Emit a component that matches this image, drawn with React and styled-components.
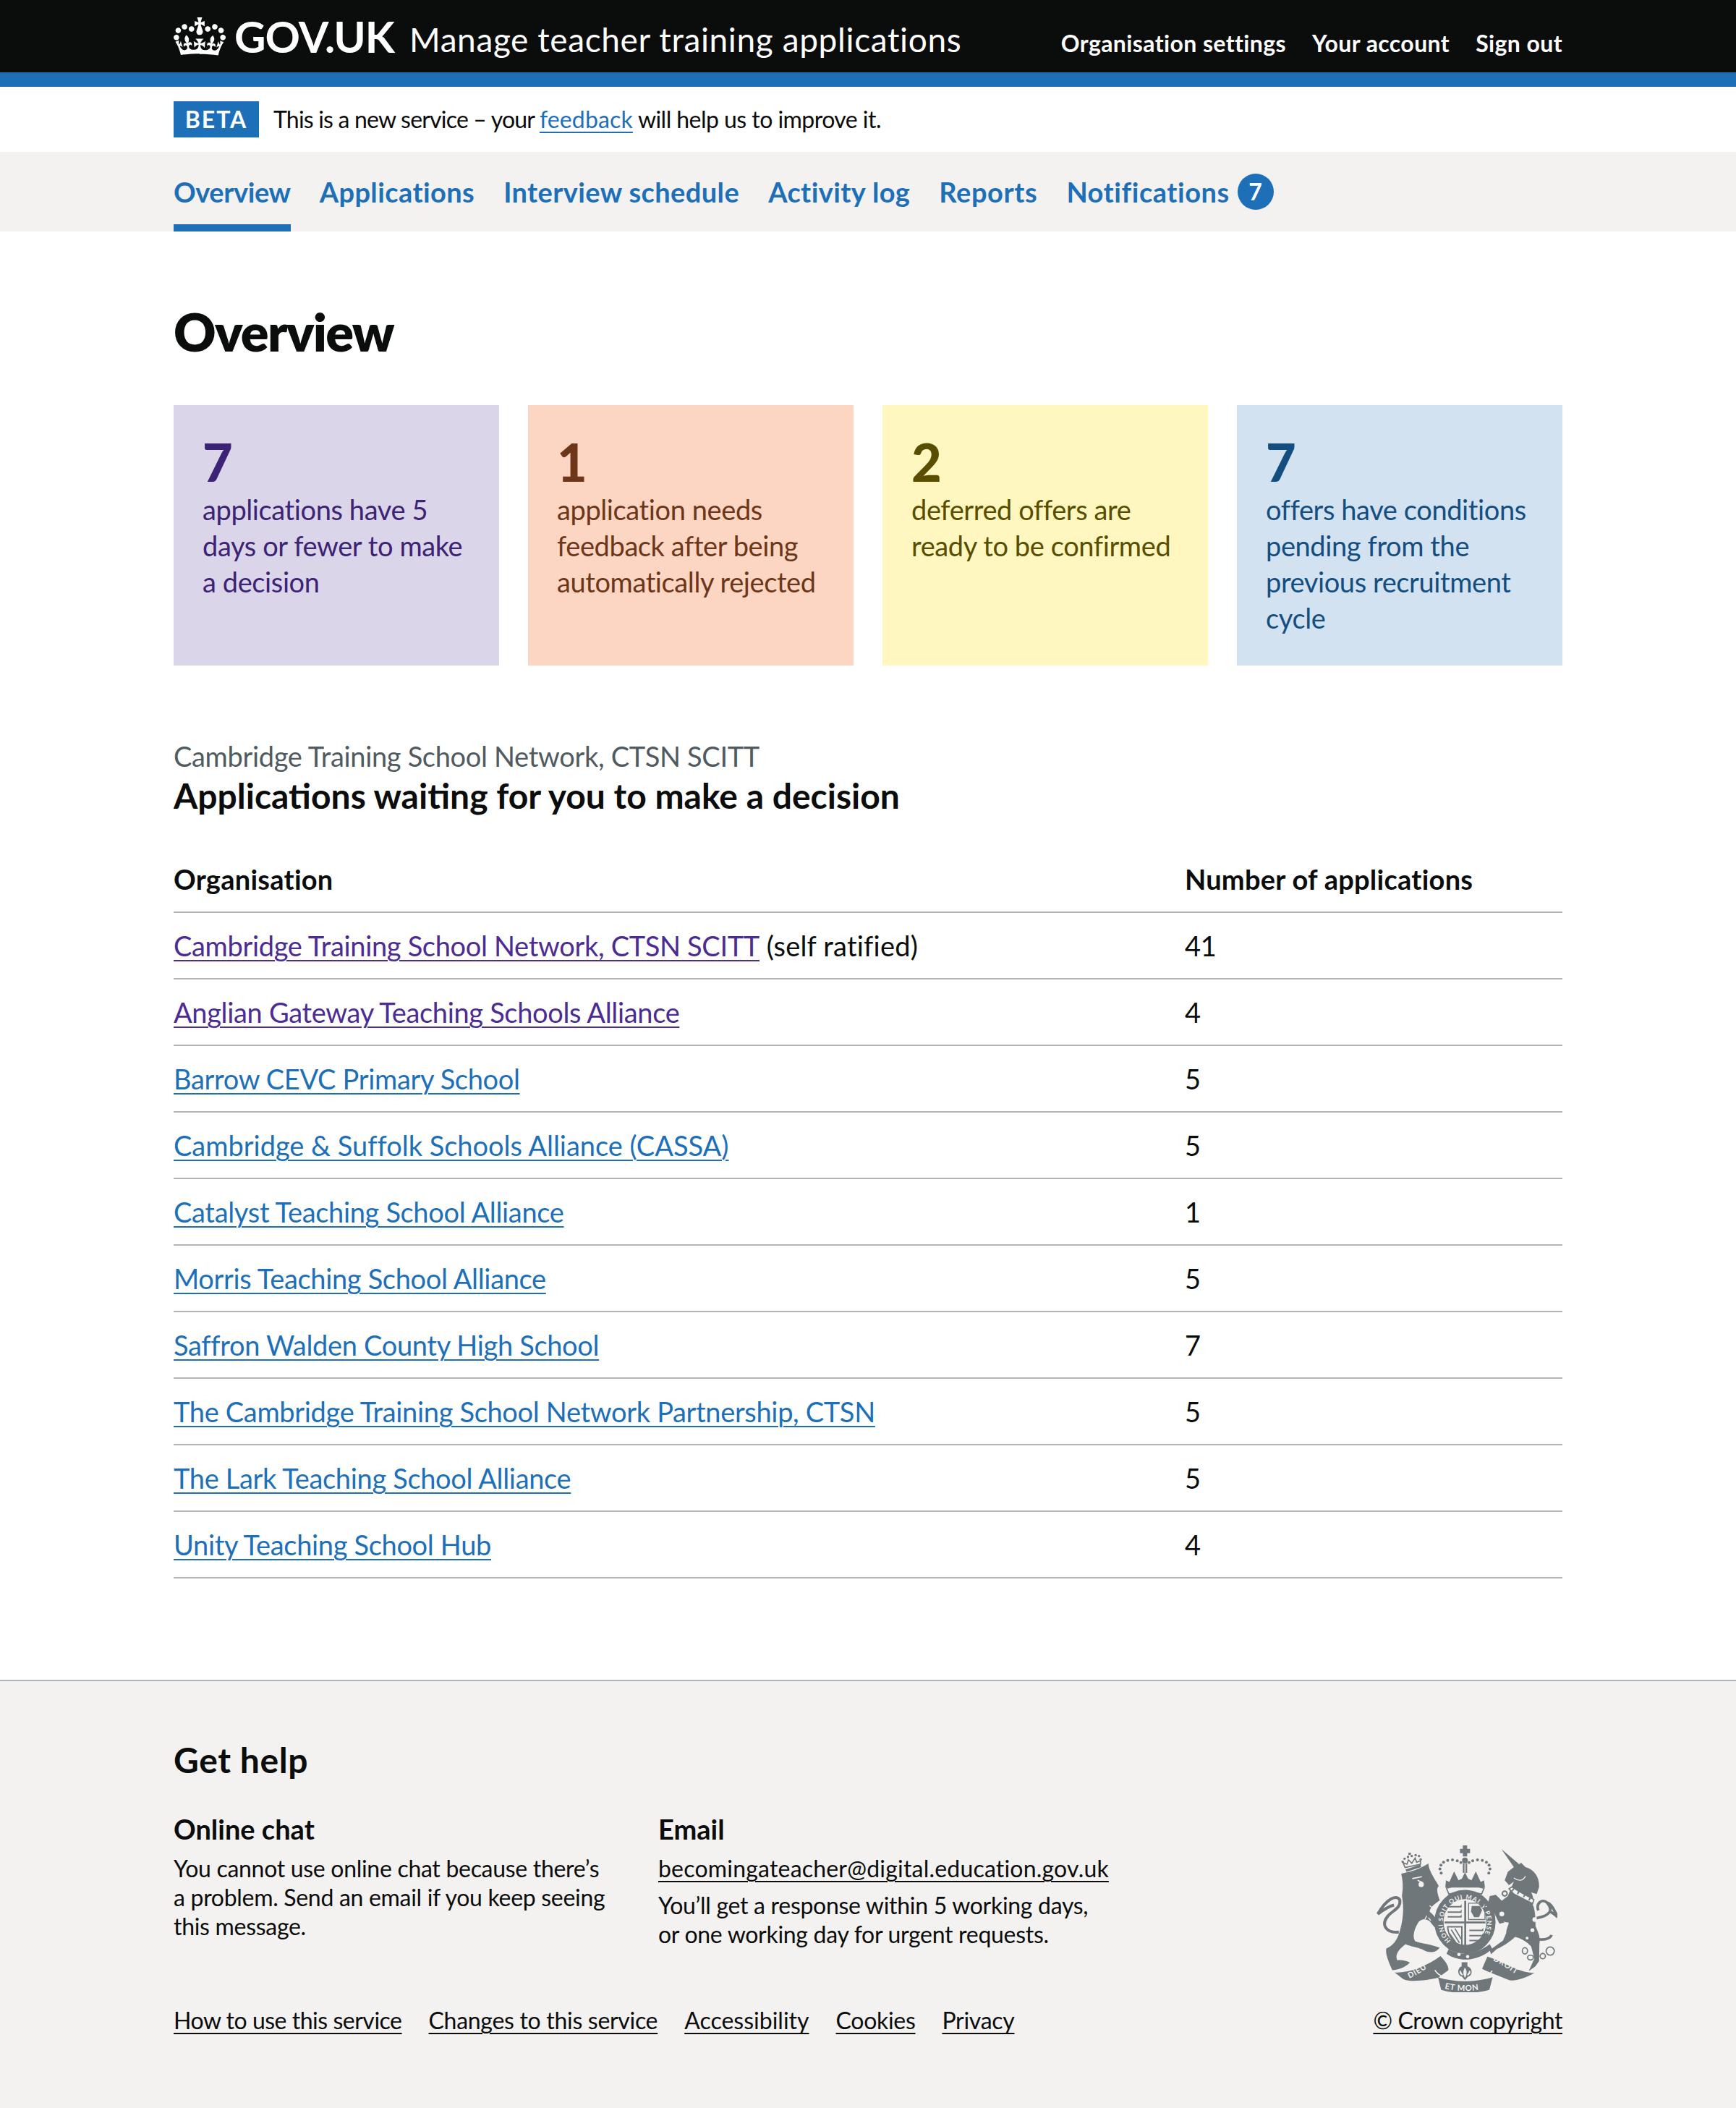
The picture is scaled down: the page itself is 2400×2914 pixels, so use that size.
import React from "react";
import styled, { createGlobalStyle } from "styled-components";

const FONT = `Lato, "Liberation Sans", Arial, sans-serif`;
const BLUE = "#1d70b8";
const INK = "#0b0c0c";

const GlobalStyle = createGlobalStyle`
  html, body { margin: 0; padding: 0; background: #fff; }
  body { font-family: ${FONT}; color: ${INK}; font-size: 38px; line-height: 50px; }
  * { box-sizing: border-box; }
`;

const Width = styled.div`
  width: 1920px;
  margin: 0 auto;
`;

const Header = styled.header`
  height: 120px;
  background: ${INK};
  border-bottom: 20px solid ${BLUE};
  color: #fff;
`;

const HeaderInner = styled(Width)`
  display: flex;
  align-items: center;
  justify-content: space-between;
  height: 100px;
`;

const Brand = styled.div`
  display: flex;
  align-items: center;
`;

const Logotype = styled.span`
  font-size: 60px;
  font-weight: 700;
  line-height: 60px;
  margin-left: 12px;
  letter-spacing: -1px;
`;

const ServiceName = styled.span`
  font-size: 46px;
  line-height: 60px;
  margin-left: 21px;
  letter-spacing: 0.62px;
  padding-top: 10px;
`;

const HeaderNav = styled.nav`
  display: flex;
  gap: 36px;
  padding-top: 20px;
  font-size: 32px;
  font-weight: 700;
  line-height: 40px;
  letter-spacing: 0.4px;
`;

const Beta = styled(Width)`
  display: flex;
  align-items: center;
  height: 90px;
  font-size: 32px;
  line-height: 40px;
  letter-spacing: -0.54px;
`;

const Tag = styled.strong`
  width: 118px;
  height: 50px;
  margin-right: 20px;
  background: ${BLUE};
  color: #fff;
  font-size: 32px;
  line-height: 50px;
  text-align: center;
  letter-spacing: 2px;
`;

const BetaLead = styled.span`
  letter-spacing: -0.8px;
`;

const Link = styled.a`
  color: ${({ $color }) => $color || BLUE};
  letter-spacing: ${({ $ls }) => $ls || "inherit"};
  text-decoration: underline;
  text-decoration-thickness: 2px;
  text-underline-offset: 5px;
`;

const SubNav = styled.nav`
  height: 110px;
  background: #f3f2f1;
`;

const SubNavList = styled(Width)`
  display: flex;
  gap: 40px;
  height: 110px;
`;

const SubNavItem = styled.a`
  display: flex;
  align-items: center;
  gap: 11px;
  height: 110px;
  padding-top: 10px;
  color: ${BLUE};
  font-size: 38px;
  font-weight: 700;
  letter-spacing: ${({ $ls }) => $ls || "0.4px"};
  border-bottom: 10px solid ${({ $active }) => ($active ? BLUE : "transparent")};
`;

const Badge = styled.span`
  width: 50px;
  height: 50px;
  border-radius: 50%;
  background: ${BLUE};
  color: #fff;
  font-size: 32px;
  line-height: 50px;
  text-align: center;
`;

const Main = styled(Width)`
  padding-top: 98px;
  padding-bottom: 140px;
`;

const Title = styled.h1`
  margin: 0 0 62px;
  font-size: 72px;
  line-height: 80px;
  font-weight: 800;
  letter-spacing: -1.7px;
`;

const Cards = styled.div`
  display: grid;
  grid-template-columns: repeat(4, 450px);
  gap: 40px;
  margin-bottom: 100px;
`;

const Card = styled.a`
  display: block;
  height: 360px;
  padding: 42px 40px 40px;
  background: ${({ $bg }) => $bg};
  color: ${({ $fg }) => $fg};
`;

const CardNumber = styled.div`
  font-size: 72px;
  font-weight: 900;
  line-height: 72px;
  margin-bottom: 5px;
`;

const CardText = styled.div`
  font-size: 38px;
  line-height: 50px;
  letter-spacing: -0.4px;
`;

const Caption = styled.div`
  color: #505a5f;
  font-size: 38px;
  line-height: 50px;
  letter-spacing: -0.33px;
`;

const SectionTitle = styled.h2`
  margin: 0 0 40px;
  font-size: 48px;
  line-height: 60px;
  font-weight: 700;
`;

const Table = styled.table`
  width: 100%;
  border-collapse: collapse;
  font-size: 38px;
  line-height: 50px;
  letter-spacing: -0.33px;
`;

const Th = styled.th`
  padding: 20px 40px 20px 0;
  text-align: left;
  font-weight: 700;
  letter-spacing: 0.25px;
  border-bottom: 2px solid #b1b4b6;
  &:last-child { width: 522px; padding-right: 0; }
`;

const Td = styled.td`
  padding: 20px 40px 20px 0;
  border-bottom: 2px solid #b1b4b6;
  &:last-child { padding-right: 0; }
`;

const Note = styled.span`
  letter-spacing: 0.2px;
`;

const Footer = styled.footer`
  height: 592px;
  background: #f3f2f1;
  border-top: 2px solid #b1b4b6;
  padding-top: 79px;
`;

const FooterInner = styled(Width)`
  display: flex;
  justify-content: space-between;
  align-items: flex-end;
`;

const HelpTitle = styled.h2`
  margin: 0 0 40px;
  font-size: 48px;
  line-height: 60px;
  font-weight: 700;
  letter-spacing: 0.6px;
`;

const HelpColumns = styled.div`
  display: flex;
  height: 270px;
`;

const HelpColumn = styled.div`
  width: 670px;
`;

const HelpHeading = styled.h3`
  margin: 0 0 10px;
  font-size: 38px;
  line-height: 50px;
  font-weight: 700;
`;

const HelpText = styled.p`
  margin: ${({ $gap }) => $gap || 0}px 0 0;
  font-size: 32px;
  line-height: 40px;
  letter-spacing: -0.3px;
`;

const FooterLinks = styled.div`
  display: flex;
  gap: 37px;
  font-size: 32px;
  line-height: 40px;
  letter-spacing: -0.3px;
`;

const CrownColumn = styled.div`
  display: flex;
  flex-direction: column;
  align-items: flex-end;
  gap: 19px;
  font-size: 32px;
  line-height: 40px;
  letter-spacing: -0.4px;
`;

const ArmsWrap = styled.div`
  margin-right: 7px;
  line-height: 0;
`;

const CROWN =
  "M25 30.2c3.5 1.5 7.7-.2 9.1-3.7 1.5-3.6-.2-7.8-3.9-9.2-3.6-1.4-7.6.3-9.1 3.9-1.4 3.5.3 7.5 3.9 9zM9 39.5c3.6 1.5 7.8-.2 9.2-3.7 1.5-3.6-.2-7.8-3.9-9.1-3.6-1.5-7.6.2-9.1 3.8-1.4 3.5.3 7.5 3.8 9zM4.4 57.2c3.5 1.5 7.7-.2 9.1-3.8 1.5-3.6-.2-7.7-3.9-9.1-3.5-1.5-7.6.3-9.1 3.8-1.4 3.5.3 7.6 3.9 9.1zm38.3-21.4c3.5 1.5 7.7-.2 9.1-3.8 1.5-3.6-.2-7.7-3.9-9.1-3.6-1.5-7.6.3-9.1 3.8-1.3 3.6.4 7.7 3.9 9.1zm64.4-5.6c-3.6 1.5-7.8-.2-9.1-3.7-1.5-3.6.2-7.8 3.8-9.2 3.6-1.4 7.7.3 9.2 3.9 1.3 3.5-.4 7.5-3.9 9zm15.9 9.3c-3.6 1.5-7.7-.2-9.1-3.7-1.5-3.6.2-7.8 3.7-9.1 3.6-1.5 7.7.2 9.2 3.8 1.5 3.5-.3 7.5-3.8 9zm4.7 17.7c-3.6 1.5-7.8-.2-9.2-3.8-1.5-3.6.2-7.7 3.9-9.1 3.6-1.5 7.7.3 9.2 3.8 1.3 3.5-.4 7.6-3.9 9.1zM89.3 35.8c-3.6 1.5-7.8-.2-9.2-3.8-1.4-3.6.2-7.7 3.9-9.1 3.6-1.5 7.7.3 9.2 3.8 1.4 3.6-.3 7.7-3.9 9.1zM69.7 17.7l8.9 4.7V9.3l-8.9 2.8c-.2-.3-.5-.6-.9-.9L72.4 0H59.6l3.5 11.2c-.3.3-.6.5-.9.9l-8.8-2.8v13.1l8.8-4.7c.3.3.6.7.9.9l-5 15.4v.1c-.2.8-.4 1.6-.4 2.4 0 4.1 3.1 7.5 7 8.1h.2c.3 0 .7.1 1 .1.4 0 .7 0 1-.1h.2c4-.6 7.1-4.1 7.1-8.1 0-.8-.1-1.7-.4-2.4V34l-5.1-15.4c.4-.2.7-.6 1-.9zM66 92.8c16.9 0 32.8 1.1 47.1 3.2 4-16.9 8.9-26.7 14-33.5l-9.6-3.4c1 4.9 1.1 7.2 0 10.2-1.5-1.4-3-4.3-4.2-8.7L108.6 76c2.8-2 5-3.2 7.5-3.3-4.4 9.4-10 11.9-13.6 11.2-4.3-.8-6.3-4.6-5.6-7.9 1-4.7 5.7-5.9 8-.5 4.3-8.7-3-11.4-7.6-8.8 7.1-7.2 7.9-13.5 2.1-21.1-8 6.1-8.1 12.3-4.5 20.8-4.7-5.4-12.1-2.5-9.5 6.2 3.4-5.2 7.9-2 7.2 3.1-.6 4.3-6.4 7.8-13.5 7.2-10.3-.9-10.9-8-11.2-13 2.5-.5 7.1 1.8 11 7.3L80.2 60c-4.1 4.4-8 5.3-12.3 5.4 1.4-4.4 8-11.6 8-11.6H55.5s6.4 7.2 7.9 11.6c-4.2-.1-8-1-12.3-5.4l1.4 16.4c3.9-5.5 8.5-7.7 10.9-7.3-.3 5-.7 12.1-11 13-7.2.6-12.9-2.9-13.5-7.2-.7-5.1 3.8-8.3 7.1-3.1 2.7-8.7-4.6-11.6-9.4-6.2 3.7-8.5 3.6-14.7-4.6-20.8-5.8 7.6-5 13.9 2.2 21.1-4.7-2.6-11.9.1-7.7 8.8 2.3-5.5 7.1-4.2 8.1.5.7 3.3-1.3 7.1-5.7 7.9-3.5.7-9-1.8-13.5-11.2 2.5.1 4.7 1.3 7.5 3.3l-4.7-15.4c-1.2 4.4-2.7 7.2-4.3 8.7-1.1-3-.9-5.3 0-10.2l-9.5 3.4c5 6.9 9.9 16.7 14 33.5 14.8-2.1 30.8-3.2 47.7-3.2z";

const CrownLogo = () => (
  <svg width="72" height="53" viewBox="0 0 132 97" fill="#fff">
    <path d={CROWN} />
  </svg>
);

const GREY = "#6f777b";
const PAPER = "#f3f2f1";

const archDots = [
  [398, 175], [393, 158], [397, 142], [408, 130], [425, 122], [445, 120], [465, 124], [480, 131],
  [596, 175], [601, 158], [597, 142], [586, 130], [569, 122], [549, 120], [529, 124], [514, 131],
];

const lionCrownDots = [
  [238, 128], [246, 115], [260, 108], [276, 104], [292, 100], [306, 104], [313, 118],
];

const shieldLions = [
  [425, 312], [425, 334], [425, 354], [515, 410], [515, 432], [515, 452],
];

// coat of arms, drawn in the zoomed coordinates of the reference
const Arms = () => (
  <svg width="250" height="203" viewBox="130 60 750 610" fill={GREY}>
    <defs>
      <path id="garter" d="M438 456 A92 98 0 1 1 556 456" />
      <path id="scrollLeft" d="M265 612 C300 600 335 572 372 548" />
      <path id="scrollRight" d="M612 538 C650 552 690 585 735 612" />
      <path id="scrollMid" d="M412 654 C460 668 530 668 585 654" />
    </defs>

    {/* lion */}
    <path d="M232 178 C260 170 300 165 345 135 C345 160 365 190 388 228 C375 240 385 265 392 288 C375 300 352 315 350 335 C375 355 395 390 402 412 C385 420 370 400 350 375 C335 362 310 365 300 385 C285 410 278 440 290 458 C320 468 360 472 392 485 C370 512 340 505 320 492 C300 482 270 480 250 470 C225 490 205 510 215 537 C235 535 255 540 268 547 C245 570 215 578 195 578 C180 545 165 510 170 488 C195 480 215 455 225 420 C240 370 245 320 235 270 C240 240 240 210 232 178 Z" />
    <path d="M222 420 C170 425 145 390 178 352 C200 328 232 320 226 286 C212 262 170 282 135 345 C165 322 185 312 202 308" fill="none" stroke={GREY} strokeWidth="12" />
    <circle cx="315" cy="222" r="11" fill={PAPER} />
    <path d="M278 198 L318 190 M300 205 L322 215" stroke={PAPER} strokeWidth="5" fill="none" />
    <path d="M350 310 L392 345 M355 372 L345 360 M330 368 L338 352" stroke={PAPER} strokeWidth="4" fill="none" />
    {lionCrownDots.map(([x, y]) => <circle key={`${x}-${y}`} cx={x} cy={y} r="5" />)}
    <path d="M262 90 H272 V100 H262 Z" />
    <path d="M248 152 L240 132 L256 138 L262 120 L276 134 L290 112 L296 130 L312 124 L312 138 Z" fill="none" stroke={GREY} strokeWidth="5" />
    <path d="M250 160 L312 140 L315 150 L254 170 Z" />

    {/* central crown */}
    {archDots.map(([x, y]) => <circle key={`${x}-${y}`} cx={x} cy={y} r="6" />)}
    <path d="M488 60 H506 V74 H518 V92 H506 V106 H488 V92 H476 V74 H488 Z" />
    <circle cx="497" cy="122" r="12" />
    <rect x="488" y="134" width="7" height="40" />
    <rect x="499" y="134" width="7" height="40" />
    <path d="M415 235 L418 205 L432 212 L452 168 L470 205 L484 198 L497 172 L510 198 L524 205 L542 168 L562 212 L576 205 L580 235 Z" />
    <path d="M420 238 C470 222 525 222 576 238 L566 262 C520 248 475 248 430 262 Z" fill="none" stroke={GREY} strokeWidth="5" />

    {/* garter and shield */}
    <ellipse cx="497" cy="378" rx="108" ry="114" fill="none" stroke={GREY} strokeWidth="38" />
    <text fontSize="26" fontWeight="700" fill={PAPER} fontFamily={FONT} letterSpacing="3">
      <textPath href="#garter">HONI SOIT QUI MAL Y PENSE</textPath>
    </text>
    <rect x="494" y="290" width="8" height="205" />
    <rect x="412" y="376" width="170" height="8" />
    {shieldLions.map(([x, y]) => (
      <path key={`${x}-${y}`} d={`M${x} ${y} h52 l6 -8 v14 h-58 Z`} />
    ))}
    <path d="M512 300 H580 V368 H512 Z" fill="none" stroke={GREY} strokeWidth="4" />
    <path d="M525 312 L560 312 L568 330 L555 358 L535 358 L522 335 Z" />
    <path d="M425 398 H484 V478 C450 465 428 440 425 398 Z" fill="none" stroke={GREY} strokeWidth="6" />
    <path d="M440 410 L474 465 M455 405 L482 450 M432 425 L458 462" stroke={GREY} strokeWidth="5" />
    <path d="M430 490 C470 520 530 520 600 470 L610 490 C550 545 470 545 420 510 Z" />
    <circle cx="472" cy="513" r="7" fill={PAPER} />
    <circle cx="508" cy="522" r="7" fill={PAPER} />

    {/* unicorn */}
    <path d="M648 75 L722 138 L730 132 L748 150 C785 160 806 190 805 232 L795 262 L772 255 C782 272 782 290 778 305 C790 330 790 370 790 395 C800 420 812 440 806 470 L805 540 L790 562 L762 582 L785 530 L772 480 C750 455 725 445 705 440 C690 455 655 480 630 490 L605 512 L600 495 L655 455 L668 425 C670 400 680 390 678 380 C665 380 650 375 640 365 L662 380 L640 385 L618 340 L590 310 L600 270 L625 265 L650 290 L675 270 L688 238 L700 210 L680 225 L662 205 L675 170 L700 150 Z" />
    <circle cx="662" cy="260" r="10" fill="none" stroke={GREY} strokeWidth="6" />
    <circle cx="650" cy="345" r="10" fill={PAPER} />
    <path d="M680 240 L700 262 L778 302 L783 285 L720 250 L692 232 Z" fill={PAPER} stroke={GREY} strokeWidth="5" />
    <path d="M692 250 L700 240 M715 262 L722 250 M740 275 L748 262 M762 288 L770 276" stroke={GREY} strokeWidth="6" />
    <path d="M700 195 C718 208 738 210 748 188" stroke={PAPER} strokeWidth="4" fill="none" />
    <circle cx="787" cy="368" r="10" fill={PAPER} />
    <circle cx="777" cy="412" r="8" fill={PAPER} />
    <circle cx="755" cy="445" r="6" fill={PAPER} />
    <path d="M795 362 C850 352 865 330 838 298 C818 280 790 300 802 330 M838 298 C855 300 868 330 882 358 C868 345 858 338 845 332 M800 450 C840 455 855 440 856 432" fill="none" stroke={GREY} strokeWidth="11" />
    <ellipse cx="746" cy="498" rx="11" ry="13" fill="none" stroke={GREY} strokeWidth="5" />
    <ellipse cx="769" cy="526" rx="12" ry="10" fill="none" stroke={GREY} strokeWidth="5" />
    <circle cx="820" cy="520" r="11" fill="none" stroke={GREY} strokeWidth="5" />
    <circle cx="851" cy="499" r="17" fill="none" stroke={GREY} strokeWidth="5" />

    {/* motto scroll */}
    <path d="M205 588 C270 590 340 560 395 520 C420 545 430 565 428 578 L385 610 C340 620 270 630 240 615 Z" />
    <path d="M590 522 C640 535 720 590 785 590 C750 610 705 625 680 620 C650 605 600 590 568 572 Z" />
    <path d="M385 608 C450 630 540 630 612 608 L598 660 C530 678 460 678 398 660 Z" />
    <path d="M372 578 C385 600 415 612 425 605 M610 580 C600 600 580 610 570 605" fill="none" stroke={PAPER} strokeWidth="5" />
    <path d="M483 545 H507 V562 C530 570 530 600 510 605 L497 620 L484 605 C464 600 464 570 483 562 Z" />
    <path d="M497 570 C490 582 490 595 497 608 C504 595 504 582 497 570 Z M478 580 C472 590 480 600 488 598 M516 580 C522 590 514 600 506 598" fill={PAPER} stroke={PAPER} strokeWidth="3" />
    <text fontSize="32" fontWeight="700" fill={PAPER} fontFamily={FONT} letterSpacing="3">
      <textPath href="#scrollLeft">DIEU</textPath>
    </text>
    <text fontSize="32" fontWeight="700" fill={PAPER} fontFamily={FONT} letterSpacing="3">
      <textPath href="#scrollRight">DROIT</textPath>
    </text>
    <text fontSize="34" fontWeight="700" fill={PAPER} fontFamily={FONT} letterSpacing="2">
      <textPath href="#scrollMid">ET MON</textPath>
    </text>
  </svg>
);

const cards = [
  { n: 7, text: "applications have 5 days or fewer to make a decision", bg: "#dbd5e9", fg: "#3d2375" },
  { n: 1, text: "application needs feedback after being automatically rejected", bg: "#fcd6c3", fg: "#6e3619" },
  { n: 2, text: "deferred offers are ready to be confirmed", bg: "#fff7bf", fg: "#594d00" },
  { n: 7, text: "offers have conditions pending from the previous recruitment cycle", bg: "#d2e2f1", fg: "#144e81" },
];

const rows = [
  { name: "Cambridge Training School Network, CTSN SCITT", count: 41, visited: true, note: " (self ratified)" },
  { name: "Anglian Gateway Teaching Schools Alliance", count: 4, visited: true },
  { name: "Barrow CEVC Primary School", count: 5 },
  { name: "Cambridge & Suffolk Schools Alliance (CASSA)", count: 5, ls: "-0.02px" },
  { name: "Catalyst Teaching School Alliance", count: 1 },
  { name: "Morris Teaching School Alliance", count: 5 },
  { name: "Saffron Walden County High School", count: 7 },
  { name: "The Cambridge Training School Network Partnership, CTSN", count: 5 },
  { name: "The Lark Teaching School Alliance", count: 5 },
  { name: "Unity Teaching School Hub", count: 4 },
];

const App = () => (
  <>
    <GlobalStyle />
    <Header>
      <HeaderInner>
        <Brand>
          <CrownLogo />
          <Logotype>GOV.UK</Logotype>
          <ServiceName>Manage teacher training applications</ServiceName>
        </Brand>
        <HeaderNav>
          <span>Organisation settings</span>
          <span>Your account</span>
          <span>Sign out</span>
        </HeaderNav>
      </HeaderInner>
    </Header>
    <Beta>
      <Tag>BETA</Tag>
      <span>
        <BetaLead>This is a new service – your </BetaLead>
        <Link $ls="0.15px">feedback</Link> will help us to improve it.
      </span>
    </Beta>
    <SubNav>
      <SubNavList>
        <SubNavItem $active $ls="-0.4px">Overview</SubNavItem>
        <SubNavItem>Applications</SubNavItem>
        <SubNavItem>Interview schedule</SubNavItem>
        <SubNavItem>Activity log</SubNavItem>
        <SubNavItem $ls="0.6px">Reports</SubNavItem>
        <SubNavItem $ls="0.55px">Notifications<Badge>7</Badge></SubNavItem>
      </SubNavList>
    </SubNav>
    <Main>
      <Title>Overview</Title>
      <Cards>
        {cards.map((c) => (
          <Card key={c.text} $bg={c.bg} $fg={c.fg}>
            <CardNumber>{c.n}</CardNumber>
            <CardText>{c.text}</CardText>
          </Card>
        ))}
      </Cards>
      <Caption>Cambridge Training School Network, CTSN SCITT</Caption>
      <SectionTitle>Applications waiting for you to make a decision</SectionTitle>
      <Table>
        <thead>
          <tr>
            <Th>Organisation</Th>
            <Th>Number of applications</Th>
          </tr>
        </thead>
        <tbody>
          {rows.map((r) => (
            <tr key={r.name}>
              <Td>
                <Link $color={r.visited ? "#4c2c92" : BLUE} $ls={r.ls}>{r.name}</Link>
                {r.note && <Note>{r.note}</Note>}
              </Td>
              <Td>{r.count}</Td>
            </tr>
          ))}
        </tbody>
      </Table>
    </Main>
    <Footer>
      <FooterInner>
        <div>
          <HelpTitle>Get help</HelpTitle>
          <HelpColumns>
            <HelpColumn>
              <HelpHeading>Online chat</HelpHeading>
              <HelpText>
                You cannot use online chat because there’s<br />
                a problem. Send an email if you keep seeing<br />
                this message.
              </HelpText>
            </HelpColumn>
            <HelpColumn>
              <HelpHeading>Email</HelpHeading>
              <HelpText><Link $color={INK} $ls="0.2px">becomingateacher@digital.education.gov.uk</Link></HelpText>
              <HelpText $gap={11}>
                You’ll get a response within 5 working days,<br />
                or one working day for urgent requests.
              </HelpText>
            </HelpColumn>
          </HelpColumns>
          <FooterLinks>
            <Link $color={INK} $ls="-0.48px">How to use this service</Link>
            <Link $color={INK}>Changes to this service</Link>
            <Link $color={INK} $ls="0px">Accessibility</Link>
            <Link $color={INK}>Cookies</Link>
            <Link $color={INK}>Privacy</Link>
          </FooterLinks>
        </div>
        <CrownColumn>
          <ArmsWrap><Arms /></ArmsWrap>
          <Link $color={INK}>© Crown copyright</Link>
        </CrownColumn>
      </FooterInner>
    </Footer>
  </>
);

export default App;
